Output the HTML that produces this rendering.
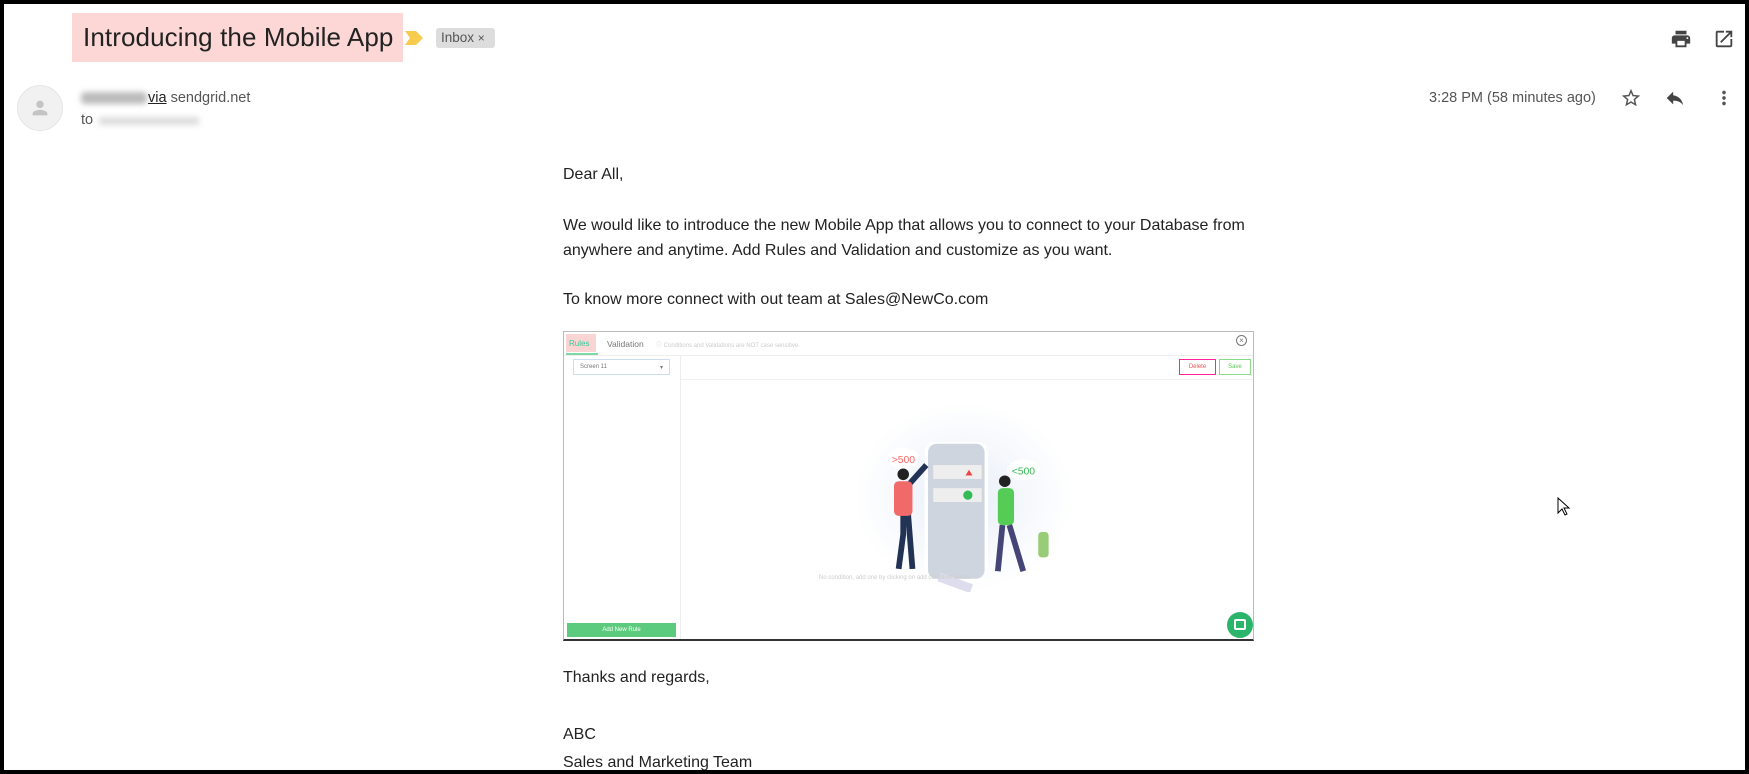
<!DOCTYPE html>
<html><head><meta charset="utf-8"><style>
*{margin:0;padding:0;box-sizing:border-box}
body{width:1749px;height:774px;background:#000;position:relative;overflow:hidden;font-family:"Liberation Sans",Arial,sans-serif}
#pg{position:absolute;left:4px;top:4px;width:1741px;height:766px;background:#fff;overflow:hidden}
.a{position:absolute}
.t{color:#222;font-size:16px;white-space:nowrap}
</style></head><body>
<div id="pg">
<div class="a" style="left:68px;top:9px;width:331px;height:49px;background:#fdd6d6"></div>
<div class="a" style="left:79px;top:18px;font-size:26px;color:#222;white-space:nowrap;letter-spacing:0.1px">Introducing the Mobile App</div>
<svg class="a" style="left:401px;top:27px" width="20" height="14"><path d="M0 0H11L18 7L11 14H0L5 7Z" fill="#f7cb4d"/></svg>
<div class="a" style="left:432px;top:24px;width:59px;height:20px;background:#ddd;border-radius:3px;font-size:13.5px;color:#555;padding:2px 0 0 5px">Inbox <span style="font-size:12px">×</span></div>
<svg class="a" style="left:1666px;top:24px" width="22" height="22" viewBox="0 0 24 24"><path fill="#444" d="M19 8H5c-1.66 0-3 1.34-3 3v6h4v4h12v-4h4v-6c0-1.66-1.34-3-3-3zm-3 11H8v-5h8v5zm3-7c-.55 0-1-.45-1-1s.45-1 1-1 1 .45 1 1-.45 1-1 1zm-1-9H6v4h12V3z"/></svg>
<svg class="a" style="left:1709px;top:24px" width="22" height="22" viewBox="0 0 24 24"><path fill="#444" d="M19 19H5V5h7V3H5a2 2 0 0 0-2 2v14a2 2 0 0 0 2 2h14c1.1 0 2-.9 2-2v-7h-2v7zM14 3v2h3.59l-9.830 9.83 1.41 1.41L19 6.41V10h2V3h-7z"/></svg>
<div class="a" style="left:13px;top:81px;width:46px;height:46px;border-radius:50%;background:#f1f1f1;border:1px solid #e6e6e6"></div>
<svg class="a" style="left:25px;top:93px" width="22" height="22" viewBox="0 0 24 24"><path fill="#c4c4c4" d="M12 12c2.2 0 4-1.8 4-4s-1.8-4-4-4-4 1.8-4 4 1.8 4 4 4zm0 2c-2.7 0-8 1.3-8 4v2h16v-2c0-2.7-5.3-4-8-4z"/></svg>
<div class="a" style="left:77px;top:88px;width:66px;height:12px;background:#bbb;filter:blur(3px);border-radius:4px"></div>
<div class="a" style="left:144px;top:86px;font-size:14.5px;color:#555;white-space:nowrap"><span style="text-decoration:underline;color:#222">via</span> sendgrid.net</div>
<div class="a" style="left:77px;top:108px;font-size:14.5px;color:#555">to</div>
<div class="a" style="left:95px;top:113px;width:100px;height:8px;background:#ddd;filter:blur(3px)"></div>
<div class="a" style="left:1425px;top:86px;font-size:14.5px;color:#555;white-space:nowrap">3:28 PM (58 minutes ago)</div>
<svg class="a" style="left:1616px;top:83px" width="22" height="22" viewBox="0 0 24 24"><path fill="#555" d="M22 9.24l-7.19-.62L12 2 9.19 8.630 2 9.24l5.46 4.73L5.82 21 12 17.27 18.18 21l-1.63-7.03L22 9.24zM12 15.4l-3.76 2.27 1-4.28-3.32-2.88 4.38-.38L12 6.1l1.71 4.04 4.38.38-3.32 2.88 1 4.28L12 15.4z"/></svg>
<svg class="a" style="left:1660px;top:83px" width="22" height="22" viewBox="0 0 24 24"><path fill="#444" d="M10 9V5l-7 7 7 7v-4.1c5 0 8.5 1.6 11 5.1-1-5-4-10-11-11z"/></svg>
<svg class="a" style="left:1709px;top:83px" width="22" height="22" viewBox="0 0 24 24"><path fill="#555" d="M12 8c1.1 0 2-.9 2-2s-.9-2-2-2-2 .9-2 2 .9 2 2 2zm0 2c-1.1 0-2 .9-2 2s.9 2 2 2 2-.9 2-2-.9-2-2-2zm0 6c-1.1 0-2 .9-2 2s.9 2 2 2 2-.9 2-2-.9-2-2-2z"/></svg>
<div class="a t" style="left:559px;top:162px">Dear All,</div>
<div class="a t" style="left:559px;top:209px;line-height:25px">We would like to introduce the new Mobile App that allows you to connect to your Database from<br>anywhere and anytime. Add Rules and Validation and customize as you want.</div>
<div class="a t" style="left:559px;top:287px">To know more connect with out team at Sales@NewCo.com</div>
<div class="a" style="left:559px;top:327px;width:691px;height:310px;border:1px solid #bbb;border-bottom:2px solid #333;background:#fff;overflow:hidden">
 <div class="a" style="left:2px;top:2px;width:30px;height:18px;background:#fbd4d4"></div>
 <div class="a" style="left:5px;top:7px;font-size:8px;color:#3c9">Rules</div>
 <div class="a" style="left:2px;top:21px;width:32px;height:2px;background:#7dd8a6"></div>
 <div class="a" style="left:43px;top:7px;font-size:8.5px;color:#777">Validation</div>
 <div class="a" style="left:92px;top:8px;font-size:6px;color:#ccc;white-space:nowrap">ⓘ Conditions and Validations are NOT case sensitive.</div>
 <div class="a" style="left:672px;top:3px;width:11px;height:11px;border:1px solid #777;border-radius:50%;font-size:8px;line-height:9px;text-align:center;color:#777">×</div>
 <div class="a" style="left:0;top:23px;width:691px;height:1px;background:#eee"></div>
 <div class="a" style="left:116px;top:23px;width:1px;height:290px;background:#eee"></div>
 <div class="a" style="left:116px;top:47px;width:575px;height:1px;background:#f0f0f0"></div>
 <div class="a" style="left:9px;top:27px;width:97px;height:16px;border:1px solid #cde;font-size:6px;color:#777;padding:4px 6px">Screen 11<span style="float:right">▾</span></div>
 <div class="a" style="left:615px;top:27px;width:37px;height:16px;border:1px solid #f29;font-size:6px;color:#e55;text-align:center;line-height:14px">Delete</div>
 <div class="a" style="left:655px;top:27px;width:32px;height:16px;border:1px solid #8d8;font-size:6px;color:#5c5;text-align:center;line-height:14px">Save</div>
 <div class="a" style="left:290px;top:70px;width:220px;height:190px;border-radius:50%;background:radial-gradient(#e8eef8,#fff 70%)"></div>
 <svg class="a" style="left:305px;top:110px" width="200" height="150" viewBox="0 0 170 130">
  <rect x="48" y="0" width="52" height="120" rx="9" fill="#cfd5de" stroke="#fff" stroke-width="3"/>
  <rect x="54" y="20" width="42" height="12" fill="#eee"/><rect x="54" y="40" width="42" height="12" fill="#eee"/>
  <circle cx="84" cy="46" r="4" fill="#3b5"/><path d="M82 29l3 -5 3 5z" fill="#e44"/>
  <path d="M30 40l18-20M28 60v20l-4 30M32 60l4 50" stroke="#235" stroke-width="5"/>
  <rect x="20" y="34" width="16" height="30" rx="4" fill="#f06a6a"/><circle cx="28" cy="28" r="5" fill="#222"/>
  <rect x="110" y="40" width="14" height="32" rx="4" fill="#5c5"/><circle cx="116" cy="34" r="5" fill="#222"/>
  <path d="M114 72l-4 40M120 72l12 40" stroke="#447" stroke-width="5"/>
  <ellipse cx="28" cy="14" rx="14" ry="9" fill="#fff"/><text x="18" y="18" font-size="9" fill="#f66" font-family="Liberation Sans">&gt;500</text>
  <ellipse cx="132" cy="24" rx="14" ry="9" fill="#fff"/><text x="122" y="28" font-size="9" fill="#3b5" font-family="Liberation Sans">&lt;500</text>
  <rect x="58" y="118" width="30" height="8" fill="#dde" transform="rotate(20 73 122)"/>
  <rect x="145" y="78" width="9" height="22" rx="3" fill="#9c7"/>
 </svg>
 <div class="a" style="left:255px;top:243px;font-size:6px;color:#ccc;white-space:nowrap">No condition, add one by clicking on add condition button</div>
 <div class="a" style="left:3px;top:291px;width:109px;height:14px;background:#5ccb7d;font-size:6px;color:#fff;text-align:center;line-height:14px">Add New Rule</div>
 <div class="a" style="left:663px;top:280px;width:26px;height:26px;border-radius:50%;background:#2bb56a"></div>
 <div class="a" style="left:670px;top:287px;width:12px;height:11px;border:2px solid #fff;border-radius:2px"></div>
</div>
<div class="a t" style="left:559px;top:665px">Thanks and regards,</div>
<div class="a t" style="left:559px;top:722px">ABC</div>
<div class="a t" style="left:559px;top:750px">Sales and Marketing Team</div>
<svg class="a" style="left:1553px;top:493px" width="14" height="20"><path d="M1 1v15l4-4 3 6 2-1-3-6h5z" fill="#fff" stroke="#000"/></svg>
</div>
</body></html>
